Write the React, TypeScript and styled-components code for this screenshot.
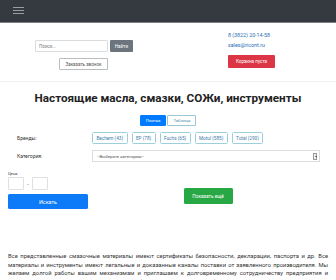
import styled, { createGlobalStyle } from "styled-components";

const GlobalStyle = createGlobalStyle`
  body {
    margin: 0;
    background: #ffffff;
    font-family: Roboto, "Liberation Sans", sans-serif;
    color: #212529;
  }
  * {
    box-sizing: border-box;
  }
`;

const brands = ["Bechem (43)", "EP (78)", "Fuchs (65)", "Motul (585)", "Total (290)"];

export default function App() {
  return (
    <Page>
      <GlobalStyle />
      <Navbar>
        <Burger>
          <span />
          <span />
          <span />
        </Burger>
      </Navbar>
      <TopHeader>
        <LeftCol>
          <SearchForm>
            <SearchInput placeholder="Поиск..." />
            <SearchButton>Найти</SearchButton>
          </SearchForm>
          <CallButton>Заказать звонок</CallButton>
        </LeftCol>
        <RightCol>
          <Contact>8 (3822) 20-14-58</Contact>
          <Contact>sales@ricont.ru</Contact>
          <CartButton>Корзина пуста</CartButton>
        </RightCol>
      </TopHeader>
      <Main>
        <Title>Настоящие масла, смазки, СОЖи, инструменты</Title>
        <ViewToggle>
          <ToggleButton active>Плитка</ToggleButton>
          <ToggleButton>Таблица</ToggleButton>
        </ViewToggle>
        <FilterRow>
          <FilterLabel>Бренды:</FilterLabel>
          <BrandList>
            {brands.map((b) => (
              <BrandButton key={b}>{b}</BrandButton>
            ))}
          </BrandList>
        </FilterRow>
        <FilterRow>
          <FilterLabel>Категория:</FilterLabel>
          <Select>
            <span>--Выберите категорию--</span>
            <SelectArrow />
          </Select>
        </FilterRow>
        <SearchRow>
          <PriceBlock>
            <PriceLabel>Цена:</PriceLabel>
            <PriceInputs>
              <PriceInput />
              <Dash>-</Dash>
              <PriceInput />
            </PriceInputs>
            <FindButton>Искать</FindButton>
          </PriceBlock>
          <MoreWrap>
            <MoreButton>Показать ещё</MoreButton>
          </MoreWrap>
        </SearchRow>
        <Description>
          Все представленные смазочные материалы имеют сертификаты безопасности, декларации,
          паспорта и др. Все материалы и инструменты имеют легальные и доказанные каналы поставки
          от заявленного производителя. Мы желаем долгой работы вашим механизмам и приглашаем к
          долговременному сотрудничеству предприятия и частных лиц, занимающихся эксплуатацией и
          обслуживанием техники и оборудования.
        </Description>
      </Main>
    </Page>
  );
}

const Page = styled.div`
  width: 336px;
  height: 280px;
  overflow: hidden;
`;

const Navbar = styled.div`
  height: 23px;
  background: #343a40;
  border-bottom: 1px solid #7d8287;
  display: flex;
  align-items: center;
  padding-left: 13px;
`;

const Burger = styled.div`
  width: 11px;
  display: flex;
  flex-direction: column;
  gap: 2px;
  margin-top: -1px;

  span {
    display: block;
    height: 1px;
    background: #9a9ea3;
  }
`;

const TopHeader = styled.div`
  height: 59px;
  display: flex;
  border-bottom: 1px solid #efefef;
`;

const LeftCol = styled.div`
  width: 168px;
  display: flex;
  flex-direction: column;
  align-items: center;
  padding-top: 17px;
  gap: 6px;
`;

const SearchForm = styled.div`
  display: flex;
  gap: 2px;
`;

const SearchInput = styled.input`
  width: 73px;
  height: 12px;
  border: 1px solid #dadde0;
  border-radius: 1px;
  padding: 0 3px;
  font-family: Roboto, sans-serif;
  font-size: 4.6px;
  outline: none;

  &::placeholder {
    color: #777;
  }
`;

const SearchButton = styled.button`
  width: 23px;
  height: 12px;
  padding: 0;
  border: none;
  border-radius: 1px;
  background: #6c757d;
  color: #fff;
  font-family: Roboto, sans-serif;
  font-size: 4.6px;
`;

const CallButton = styled.button`
  width: 49px;
  height: 12px;
  padding: 0;
  background: #fff;
  border: 1px solid #b9bcbf;
  border-radius: 1px;
  color: #555;
  font-family: Roboto, sans-serif;
  font-size: 4.6px;
  margin-left: -1px;
`;

const RightCol = styled.div`
  flex: 1;
  display: flex;
  flex-direction: column;
  align-items: flex-start;
  padding: 9px 0 0 60px;
`;

const Contact = styled.div`
  font-size: 5.3px;
  line-height: 7px;
  color: #2a6fb5;
  margin-bottom: 3px;
`;

const CartButton = styled.button`
  margin-top: 3px;
  width: 47px;
  height: 13px;
  padding: 0;
  border: none;
  border-radius: 1px;
  background: #dc3545;
  color: #fff;
  font-family: Roboto, sans-serif;
  font-size: 4.6px;
`;

const Main = styled.div`
  padding: 0 8px;
`;

const Title = styled.h1`
  margin: 9px 0 0;
  text-align: center;
  font-size: 11.7px;
  line-height: 15px;
  font-weight: 700;
  color: #222;
`;

const ViewToggle = styled.div`
  display: flex;
  justify-content: center;
  gap: 1px;
  margin-top: 9px;
`;

const ToggleButton = styled.button<{ active?: boolean }>`
  height: 11px;
  padding: 0 5px;
  border: 1px solid ${(p) => (p.active ? "#007bff" : "#9cc6d6")};
  border-radius: 1px;
  background: ${(p) => (p.active ? "#007bff" : "#fff")};
  color: ${(p) => (p.active ? "#fff" : "#4a8db0")};
  font-family: Roboto, sans-serif;
  font-size: 4.3px;
`;

const FilterRow = styled.div`
  display: flex;
  align-items: center;
  margin-top: 6px;
`;

const FilterLabel = styled.div`
  width: 84px;
  padding-left: 9px;
  font-size: 5px;
  color: #333;
`;

const BrandList = styled.div`
  display: flex;
  gap: 4px;
`;

const BrandButton = styled.button`
  height: 12px;
  padding: 0 3.4px;
  background: #fff;
  border: 1px solid #9ccfdc;
  border-radius: 1.5px;
  color: #3d7ba8;
  font-family: Roboto, sans-serif;
  font-size: 4.7px;
`;

const Select = styled.div`
  width: 228px;
  height: 12px;
  border: 1px solid #dcdcdc;
  display: flex;
  align-items: center;
  justify-content: space-between;
  padding: 0 2px 0 4px;
  font-size: 4.3px;
  color: #555;
`;

const SelectArrow = styled.div`
  width: 4px;
  height: 7px;
  border: 1px solid #999;
  background: #eee;
  position: relative;

  &::after {
    content: "";
    position: absolute;
    left: 0.5px;
    top: 2px;
    border-left: 1px solid transparent;
    border-right: 1px solid transparent;
    border-top: 1.5px solid #222;
  }
`;

const SearchRow = styled.div`
  display: flex;
  align-items: flex-end;
  margin-top: 9px;
`;

const PriceBlock = styled.div`
  width: 80px;
  display: flex;
  flex-direction: column;
`;

const PriceLabel = styled.div`
  font-size: 3.8px;
  line-height: 5px;
  color: #333;
`;

const PriceInputs = styled.div`
  display: flex;
  align-items: center;
  margin-top: 1px;
`;

const PriceInput = styled.input`
  width: 16px;
  height: 13px;
  padding: 0;
  border: 1px solid #e0e0e0;
  border-radius: 1px;
`;

const Dash = styled.span`
  width: 8px;
  text-align: center;
  font-size: 5px;
  color: #333;
`;

const FindButton = styled.button`
  margin-top: 4px;
  width: 80px;
  height: 15px;
  padding: 0;
  border: none;
  border-radius: 1.5px;
  background: #0d7bf7;
  color: #fff;
  font-family: Roboto, sans-serif;
  font-size: 5.4px;
`;

const MoreWrap = styled.div`
  flex: 1;
  display: flex;
  justify-content: center;
  padding-bottom: 5px;
`;

const MoreButton = styled.button`
  width: 49px;
  height: 16px;
  padding: 0;
  border: none;
  border-radius: 1.5px;
  background: #28a745;
  color: #fff;
  font-family: Roboto, sans-serif;
  font-size: 4.8px;
`;

const Description = styled.p`
  margin: 43px 0 0;
  font-size: 5.8px;
  line-height: 8.7px;
  text-align: justify;
  color: #333;
`;
